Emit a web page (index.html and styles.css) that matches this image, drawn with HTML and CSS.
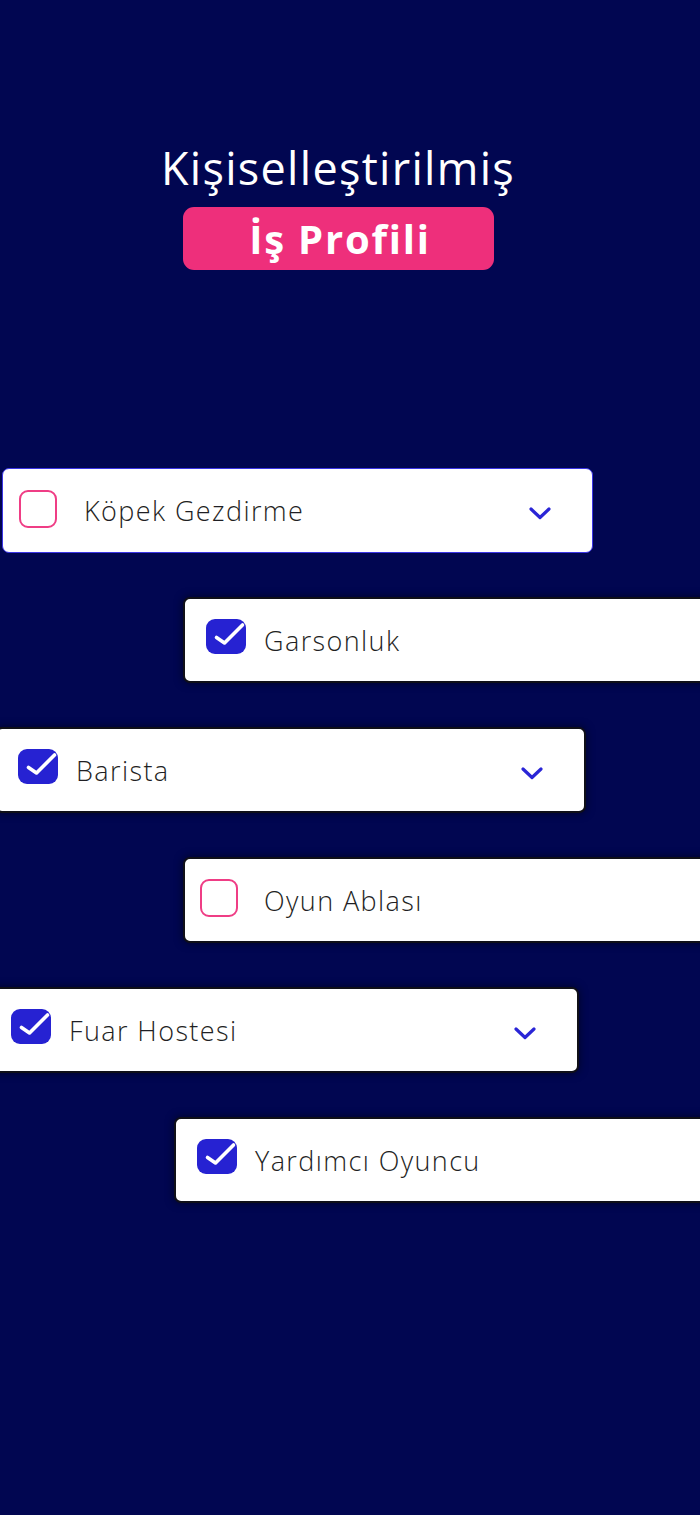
FILE: index.html
```html
<!DOCTYPE html>
<html lang="tr">
<head>
<meta charset="utf-8">
<title>Kişiselleştirilmiş İş Profili</title>
<link rel="stylesheet" href="styles.css">
</head>
<body>
<main class="page">
  <header class="hero">
    <h1 class="hero-title">Kişiselleştirilmiş</h1>
    <div class="hero-badge">İş Profili</div>
  </header>

  <section class="list">
    <div class="card card-active pos-1">
      <span class="box box-empty"></span>
      <span class="label label-empty">Köpek Gezdirme</span>
      <svg class="chev" viewBox="0 0 22 13"><path d="M2 2 L11 10.5 L20 2"/></svg>
    </div>

    <div class="card pos-2">
      <svg class="box-checked" viewBox="0 0 41 36"><rect x="0" y="0" width="40" height="35" rx="9"/><path d="M10.5 18.5 L18.5 24 L36.5 6"/></svg>
      <span class="label label-checked">Garsonluk</span>
    </div>

    <div class="card pos-3">
      <svg class="box-checked" viewBox="0 0 41 36"><rect x="0" y="0" width="40" height="35" rx="9"/><path d="M10.5 18.5 L18.5 24 L36.5 6"/></svg>
      <span class="label label-checked">Barista</span>
      <svg class="chev" viewBox="0 0 22 13"><path d="M2 2 L11 10.5 L20 2"/></svg>
    </div>

    <div class="card pos-4">
      <span class="box box-empty"></span>
      <span class="label label-empty">Oyun Ablası</span>
    </div>

    <div class="card pos-5">
      <svg class="box-checked" viewBox="0 0 41 36"><rect x="0" y="0" width="40" height="35" rx="9"/><path d="M10.5 18.5 L18.5 24 L36.5 6"/></svg>
      <span class="label label-checked">Fuar Hostesi</span>
      <svg class="chev" viewBox="0 0 22 13"><path d="M2 2 L11 10.5 L20 2"/></svg>
    </div>

    <div class="card pos-6">
      <svg class="box-checked" viewBox="0 0 41 36"><rect x="0" y="0" width="40" height="35" rx="9"/><path d="M10.5 18.5 L18.5 24 L36.5 6"/></svg>
      <span class="label label-checked">Yardımcı Oyuncu</span>
    </div>
  </section>
</main>
</body>
</html>
```

FILE: styles.css
```css
* { box-sizing: border-box; }

html, body {
  margin: 0;
  padding: 0;
}

body {
  background: #010651;
  font-family: "Open Sans", "Noto Sans", "DejaVu Sans", sans-serif;
  overflow: hidden;
  width: 700px;
  height: 1515px;
}

.page {
  width: 700px;
  min-height: 1515px;
  overflow: hidden;
}

.hero {
  display: flex;
  flex-direction: column;
  align-items: center;
  padding-top: 141px;
  padding-right: 24px;
}

.hero-title {
  margin: 0;
  color: #ffffff;
  font-size: 45px;
  line-height: 54px;
  font-weight: 500;
  letter-spacing: 1.3px;
}

.hero-badge {
  margin-top: 12px;
  width: 311px;
  height: 63px;
  border-radius: 11px;
  background: #ee2f7b;
  color: #ffffff;
  font-size: 40px;
  font-weight: 700;
  line-height: 63px;
  text-align: center;
  letter-spacing: 1.8px;
  padding-left: 4px;
}

.list {
  display: flex;
  flex-direction: column;
  align-items: flex-start;
  gap: 44px;
  margin-top: 198px;
}

.card {
  display: flex;
  align-items: center;
  height: 86px;
  width: 591px;
  flex-shrink: 0;
  background: #ffffff;
  border: 2px solid #101018;
  border-radius: 7px;
  box-shadow: 0 0 8px rgba(0, 0, 0, 0.55);
}

.card-active {
  border: 1px solid #3b35e6;
  box-shadow: none;
  height: 85px;
}

.pos-1 { margin-left: 2px; }
.pos-2 { margin-left: 183px; width: 560px; }
.pos-3 { margin-left: -5px; }
.pos-4 { margin-left: 183px; width: 560px; }
.pos-5 { margin-left: -12px; }
.pos-6 { margin-left: 174px; width: 570px; }

.box {
  flex-shrink: 0;
  display: block;
}

.box-empty {
  width: 38px;
  height: 38px;
  margin-left: 15px;
  margin-top: -4px;
  border: 2px solid #ef3d85;
  border-radius: 9px;
}

.card-active .box-empty { margin-left: 16px; }

.box-checked {
  flex-shrink: 0;
  width: 41px;
  height: 36px;
  margin-left: 21px;
  margin-top: -6px;
}

.box-checked rect { fill: #2622d2; }
.box-checked path {
  fill: none;
  stroke: #ffffff;
  stroke-width: 3.6;
  stroke-linecap: round;
  stroke-linejoin: round;
}

.label {
  color: #1f1f24;
  font-size: 27px;
  font-weight: 300;
  letter-spacing: 1.4px;
  white-space: nowrap;
}

.label-empty { margin-left: 26px; }
.card-active .label-empty { margin-left: 27px; }
.label-checked { margin-left: 17px; }

.chev {
  width: 22px;
  height: 13px;
  margin-left: auto;
  margin-right: 41px;
  margin-top: 6px;
  flex-shrink: 0;
}

.chev path {
  fill: none;
  stroke: #2a25d6;
  stroke-width: 3.2;
  stroke-linecap: round;
  stroke-linejoin: round;
}
```
